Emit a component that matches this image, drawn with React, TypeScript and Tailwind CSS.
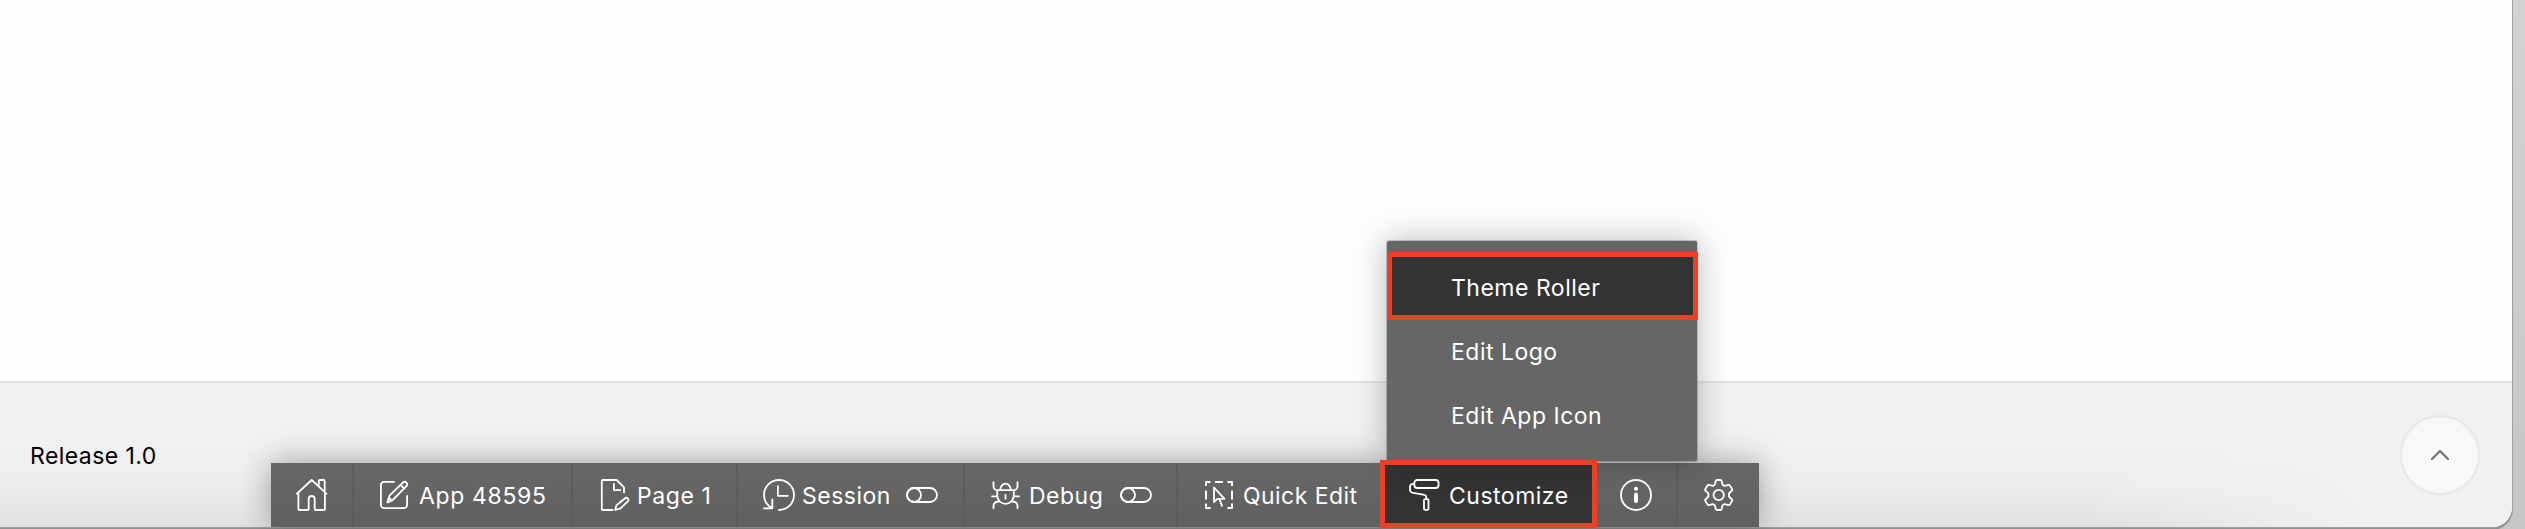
import React from "react";

const iconProps = {
  viewBox: "0 0 32 32",
  fill: "none",
  stroke: "currentColor",
  strokeWidth: 1.8,
  strokeLinecap: "round" as const,
  strokeLinejoin: "round" as const,
  className: "h-8 w-8 shrink-0",
};

function HomeIcon() {
  return (
    <svg {...iconProps}>
      <path d="M.9 14.700 15.700 1l14.700 13.700M2.400 13.500V30a1 1 0 0 0 1 1h8.300a1 1 0 0 0 1-1V20a3 3 0 0 1 6 0v10a1 1 0 0 0 1 1h8.200a1 1 0 0 0 1-1V13.500M22.800 7.300V2a1 1 0 0 1 1-1h3.900a1 1 0 0 1 1 1v11" />
    </svg>
  );
}

function EditIcon() {
  return (
    <svg {...iconProps}>
      <path d="M15 2.900H4.900a3 3 0 0 0-3 3v20.200a3 3 0 0 0 3 3h20.200a3 3 0 0 0 3-3V17M8.500 23.300l2-6.600L23.800 3.600a2.500 2.500 0 0 1 3.600 3.600L14.200 20.500zM21.500 5.900l3.600 3.600" />
      <path d="M8.500 23.300l1.400-4.500 3 2.900z" fill="currentColor" />
    </svg>
  );
}

function PageIcon() {
  return (
    <svg {...iconProps}>
      <path d="M13.500 31H3.800a1 1 0 0 1-1-1V2a1 1 0 0 1 1-1H17.600L25 8.400v5M14.900 4.800v6.300h6.400M16.200 31l1.300-4.700 8.300-6.800a2 2 0 0 1 3 2.900l-7.600 7.200z" />
    </svg>
  );
}

function SessionIcon() {
  return (
    <svg {...iconProps}>
      <path d="M16 31A15 15 0 1 0 1 16c0 5.500 3.300 10.500 8 13.200M9.300 20.500v8.800H.9M14.900 7.200v9.600h9.900" />
    </svg>
  );
}

function BugIcon() {
  return (
    <svg {...iconProps}>
      <path d="M7.200 11.200h16.600v5.300a8.300 8.300 0 0 1-16.600 0zM10.200 11a5.300 6.300 0 0 1 10.600 0M3.500 3.200v4a4 4 0 0 0 4 4M27.500 3.200v4a4 4 0 0 1-4 4M2 17.300h5M24 17.300h5M3.500 29.300v-2.500a4 4 0 0 1 4.500-4M27.500 29.300v-2.500a4 4 0 0 0-4.500-4M15.500 15.800v4" />
    </svg>
  );
}

function QuickEditIcon() {
  return (
    <svg {...iconProps}>
      <path d="M7.500 3H3v4M12 3h8M24.500 3H29v4M29 11.500v9M29 24.500V29h-4.500M7.500 29H3v-4.500M3 11.500v9" strokeLinecap="butt" strokeWidth="2" />
      <path d="M11 8.500v14.700l3.300-3.400h7.200zM16.300 20l2.700 6.800" />
    </svg>
  );
}

function RollerIcon() {
  return (
    <svg {...iconProps}>
      <rect x="5.300" y="1" width="24.300" height="8" rx="3" />
      <path d="M5.300 4.800H4A3 3 0 0 0 1 7.800v3.300a2.600 2.600 0 0 0 2 2.500l12.500 2.300a2 2 0 0 1 1.700 2v2.300M15 21.200a1 1 0 0 1 1-1h2.500a1 1 0 0 1 1 1v8.600a1 1 0 0 1-1 1H16a1 1 0 0 1-1-1z" />
    </svg>
  );
}

function InfoIcon() {
  return (
    <svg {...iconProps}>
      <circle cx="16" cy="16" r="15" />
      <circle cx="16" cy="9.700" r="2" fill="currentColor" stroke="none" />
      <path d="M16 15.500v6.500" strokeWidth="4" />
    </svg>
  );
}

function GearIcon() {
  return (
    <svg {...iconProps}>
      <circle cx="15.700" cy="16" r="5.200" />
      <path d="M14 1h3.400a1.300 1.300 0 0 1 1.200.9l1 3.800 2 1.200 3.800-1a1.300 1.300 0 0 1 1.500.6l2.200 3.600a1.300 1.300 0 0 1-.2 1.500L26 14.500v3l2.900 2.900a1.300 1.300 0 0 1 .2 1.500l-2.200 3.600a1.300 1.300 0 0 1-1.500.6l-3.800-1-2 1.200-1 3.800a1.300 1.300 0 0 1-1.200.9H14a1.300 1.300 0 0 1-1.200-.9l-1-3.800-2-1.200-3.800 1a1.300 1.300 0 0 1-1.500-.6l-2.200-3.600a1.300 1.300 0 0 1 .2-1.500l2.900-2.900v-3l-2.900-2.900a1.300 1.300 0 0 1-.2-1.500l2.200-3.600A1.300 1.300 0 0 1 6 5.900l3.800 1 2-1.200 1-3.800A1.300 1.300 0 0 1 14 1z" />
    </svg>
  );
}

function ToggleIcon() {
  return (
    <svg viewBox="0 0 32 16" fill="none" stroke="currentColor" strokeWidth="1.8" className="ml-auto h-4 w-8 shrink-0">
      <rect x="1" y="1" width="30" height="14" rx="7" />
      <circle cx="8" cy="8" r="7" />
    </svg>
  );
}

const divider = "border-r-2 border-[#5c5c5c]";
const cell = "flex h-16 shrink-0 items-center";
const label = "whitespace-nowrap pt-[2px]";

export default function App() {
  return (
    <div className="h-[529px] w-[2525px] overflow-hidden bg-linear-to-b from-[#d3d3d3] to-[#c6c6c6] font-['Inter',sans-serif] text-[23px] leading-8">
      <div className="relative flex h-[527px] w-[2512px] flex-col rounded-br-[20px] bg-[#fdfdfd] shadow-[0_0_0_1px_#a0a0a0,0_2px_0_1px_#909090]">
        <main className="grow" />
        <footer className="flex h-[146px] items-center justify-between overflow-hidden rounded-br-[20px] border-t-2 border-[#e4e4e4] bg-[#f1f1f1] pr-8 pl-[30px]">
          <span className="mt-[2px] tracking-[0.43px] text-black">Release 1.0</span>
          <button className="flex h-20 w-20 items-center justify-center rounded-full border-2 border-[#e7e7e7] bg-[#f8f8f8] text-[#707070]">
            <svg viewBox="0 0 20 12" fill="none" stroke="currentColor" strokeWidth="2.200" strokeLinecap="round" className="h-3 w-5">
              <path d="m2 10 8-8 8 8" />
            </svg>
          </button>
        </footer>
        <div className="absolute bottom-0 left-0 h-20 w-[2370px] bg-linear-to-b from-transparent via-black/[0.015] to-black/[0.065] [mask-image:linear-gradient(to_right,black_88%,transparent)]" />

        <nav className="absolute top-[463px] left-[271px] flex h-16 w-[1488px] bg-linear-to-b from-[#676767] to-[#606060] text-white shadow-[0_0_32px_rgba(0,0,0,0.35)]">
          <button className={`${cell} ${divider} w-[83px] pl-[25px]`}><HomeIcon /></button>
          <button className={`${cell} ${divider} w-[219px] gap-2 pl-[25px]`}><EditIcon /><span className={`${label} tracking-[0.65px]`}>App 48595</span></button>
          <button className={`${cell} ${divider} w-[165px] gap-[6px] pl-[26px]`}><PageIcon /><span className={`${label} tracking-[0.6px]`}>Page 1</span></button>
          <button className={`${cell} ${divider} w-[227px] gap-[7px] pr-[25px] pl-[25px]`}><SessionIcon /><span className={`${label} tracking-[0.5px]`}>Session</span><ToggleIcon /></button>
          <button className={`${cell} ${divider} w-[213px] gap-[7px] pr-6 pl-[25px]`}><BugIcon /><span className={`${label} tracking-[0.5px]`}>Debug</span><ToggleIcon /></button>
          <button className={`${cell} w-[202px] gap-2 pl-[25px]`}><QuickEditIcon /><span className={`${label} tracking-[0.45px]`}>Quick Edit</span></button>
          <button className={`${cell} w-[217px] gap-2 bg-[#333] pl-[29px]`}><RollerIcon /><span className={`${label} tracking-[0.5px]`}>Customize</span></button>
          <button className={`${cell} ${divider} w-[81px] pl-[23px]`}><InfoIcon /></button>
          <button className={`${cell} w-[81px] pl-[25px]`}><GearIcon /></button>
        </nav>

        <div className="absolute top-[241px] left-[1387px] flex h-[220px] w-[310px] flex-col rounded-[2px] bg-[#666] pt-[11px] text-white shadow-[0_0_0_1px_rgba(0,0,0,0.18),0_0_32px_rgba(0,0,0,0.28)]">
          <div className="-mr-px flex h-[68px] items-center border-[5px] border-[#ec3f23] bg-[#333] pt-[3px] pl-[59px] tracking-[0.5px]">Theme Roller</div>
          <div className="flex h-16 items-center pl-16 tracking-[0.5px]">Edit Logo</div>
          <div className="flex h-16 items-center pl-16 tracking-[0.5px]">Edit App Icon</div>
        </div>

        <div className="absolute top-[460px] left-[1380px] h-[68px] w-[217px] border-[5px] border-[#ec3f23]" />
      </div>
    </div>
  );
}
